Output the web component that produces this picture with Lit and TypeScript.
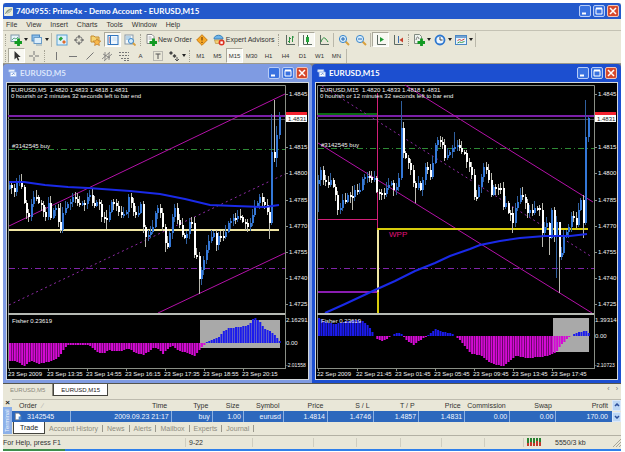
import { LitElement, html, svg, css, nothing } from "lit";
import { customElement, property } from "lit/decorators.js";
import { classMap } from "lit/directives/class-map.js";

type Pt = [number, number];

interface ChartSpec {
  title: string;
  active: boolean;
  x: number;
  left: number;
  right: number;
  heading: string;
  note: string;
  closes: number[];
  wicks: Record<number, Pt>;
  average: string;
  zero: number;
  fisher: Pt[];
  box: number[];
  scale: [string, number][];
  times: string[];
  orderY: number;
}

const STEP = 2.43;

const M5: ChartSpec = {
  title: "EURUSD,M5",
  active: false,
  x: 7,
  left: 8,
  right: 285,
  heading: "EURUSD,M5  1.4820 1.4833 1.4818 1.4831",
  note: "0 hourish or 2 minutes 32 seconds left to bar end",
  closes: [
    185, 188, 192, 183, 181, 187, 203, 213, 217, 204, 197, 197, 203, 205, 212, 217, 203, 218, 210, 208, 222, 230,
    213, 208, 204, 202, 197, 199, 203, 204, 203, 204, 197, 195, 203, 206, 202, 204, 217, 218, 220, 212, 202, 203,
    206, 212, 215, 214, 212, 197, 203, 212, 215, 213, 204, 227, 237, 235, 232, 227, 213, 208, 213, 227, 243, 247,
    233, 217, 208, 220, 225, 235, 238, 234, 222, 223, 255, 256, 279, 270, 260, 250, 241, 237, 233, 245, 236, 236,
    237, 232, 223, 221, 218, 219, 216, 217, 222, 223, 227, 223, 215, 207, 203, 197, 202, 205, 212, 223, 152, 158,
    135, 117,
  ],
  wicks: { 21: [203, 233], 40: [210, 229], 56: [225, 247], 64: [224, 252], 78: [252, 294], 107: [206, 239], 108: [114, 225], 109: [100, 162], 110: [126, 167] },
  average: "9,182 24,182 45,185 68,187 88,188 130,191 160,194 185,199 210,205 235,206 265,207 272,206 279,205",
  zero: 343,
  fisher: [
    [9, 361], [15, 361], [18, 363], [23, 366], [27, 363], [31, 361], [38, 364], [42, 363], [50, 361], [57, 358],
    [60, 354], [64, 347], [68, 345], [88, 345], [91, 348], [97, 352], [103, 354], [108, 350], [113, 351], [120, 351],
    [127, 348], [133, 352], [142, 355], [150, 350], [153, 348], [158, 349], [162, 354], [167, 349], [171, 345],
    [178, 351], [186, 353], [194, 356], [200, 348], [203, 345], [206, 342], [210, 340], [218, 337], [222, 332],
    [228, 328], [240, 327], [248, 325], [252, 319], [255, 318], [259, 322], [263, 328], [270, 332], [275, 336], [279, 341],
  ],
  box: [200, 320, 80, 28],
  scale: [["2.16291", 320], ["0.00", 343], ["-2.01558", 365]],
  times: ["23 Sep 2009", "23 Sep 13:35", "23 Sep 14:55", "23 Sep 16:15", "23 Sep 17:35", "23 Sep 18:55", "23 Sep 20:15"],
  orderY: 149,
};

const M15: ChartSpec = {
  title: "EURUSD,M15",
  active: true,
  x: 316,
  left: 317,
  right: 594,
  heading: "EURUSD,M15  1.4820 1.4833 1.4818 1.4831",
  note: "0 hourish or 12 minutes 32 seconds left to bar end",
  closes: [
    180, 170, 180, 182, 185, 180, 187, 195, 210, 208, 200, 202, 195, 196, 197, 190, 192, 190, 179, 177, 176, 177,
    180, 178, 192, 193, 193, 194, 188, 185, 183, 190, 187, 178, 128, 153, 158, 163, 170, 183, 188, 183, 190, 180,
    167, 170, 177, 163, 145, 140, 142, 145, 158, 155, 152, 148, 147, 145, 148, 152, 153, 162, 167, 175, 197, 197,
    187, 177, 167, 170, 180, 195, 187, 188, 188, 188, 207, 203, 213, 213, 223, 208, 202, 195, 197, 203, 213, 210,
    213, 208, 208, 210, 233, 227, 223, 238, 210, 236, 222, 257, 253, 237, 232, 227, 216, 218, 225, 210, 200, 223,
    137, 118,
  ],
  wicks: { 0: [175, 212], 34: [101, 180], 35: [122, 158], 14: [186, 210], 40: [181, 203], 56: [132, 152], 80: [207, 233], 84: [187, 200], 92: [203, 247], 95: [222, 255], 98: [216, 278], 99: [252, 293], 109: [195, 238], 110: [100, 225], 111: [116, 142] },
  average: "325,313 345,304 375,290 395,281 415,271 435,263 450,256 470,249 480,245 500,241 520,238 545,236 570,236 587,234",
  zero: 336,
  fisher: [
    [318, 318], [322, 320], [327, 323], [335, 324], [345, 321], [355, 320], [362, 321], [367, 325], [372, 333], [374, 336],
    [376, 339], [380, 341], [386, 339], [390, 336], [396, 333], [400, 333], [402, 336], [406, 341], [413, 345],
    [418, 341], [424, 337], [428, 335], [434, 329], [443, 332], [452, 334], [454, 336], [457, 338], [462, 344],
    [468, 351], [471, 354], [480, 355], [487, 361], [495, 365], [503, 366], [510, 360], [515, 356], [526, 358],
    [540, 357], [550, 355], [556, 351], [560, 345], [566, 339], [570, 336], [574, 334], [582, 331], [586, 331], [588, 333],
  ],
  box: [553, 318, 36, 34],
  scale: [["1.39314", 320], ["0.00", 336], ["-2.10723", 365]],
  times: ["22 Sep 2009", "22 Sep 21:45", "23 Sep 01:45", "23 Sep 05:45", "23 Sep 09:45", "23 Sep 13:45", "23 Sep 17:45"],
  orderY: 148,
};

const PRICES: [string, number][] = [
  ["1.4845", 94], ["1.4815", 147], ["1.4800", 173], ["1.4785", 200],
  ["1.4770", 226], ["1.4755", 252], ["1.4740", 278], ["1.4725", 304],
];

function interpolate(points: Pt[], x: number): number {
  for (let i = 1; i < points.length; i++) {
    const [x0, y0] = points[i - 1];
    const [x1, y1] = points[i];
    if (x <= x1) return y0 + ((y1 - y0) * Math.max(0, x - x0)) / (x1 - x0);
  }
  return points[points.length - 1][1];
}

const magnifier = (sign: string) => svg`
  <path d="M7.5 7.5l3.5 3.5" stroke="#d9a03c" stroke-width="2"/>
  <circle cx="5" cy="5" r="3.6" fill="#d6ecfb" stroke="#3b87cc"/>
  <path d=${sign} stroke="#2468b4" fill="none"/>`;
const plus = svg`<path d="M8.500 4.500v7.500M4.500 8.500h7.500" stroke="#129a22" stroke-width="2.800"/>`;
const axes = svg`<path d="M2.5 1v9.5H11" stroke="#5d6a62" fill="none"/>`;

const ICONS: Record<string, unknown> = {
  newchart: svg`<rect x="1" y="1" width="8" height="6.5" fill="#e9f4fb" stroke="#7c98a8"/><path d="M2 6l2-2 2 1 2-2" stroke="#6a8" fill="none"/>${plus}`,
  profiles: svg`<rect x="1" y="1" width="7.5" height="6" fill="#8cc0ec" stroke="#4a86c0"/><rect x="3" y="3.5" width="7.5" height="6" fill="#dceefb" stroke="#6a9cc8"/><path d="M5 11h6" stroke="#8fa8b8"/>`,
  market: svg`<rect x="1" y="1" width="10" height="10" fill="#dff0fb" stroke="#58a0d4"/><path d="M2.500 5l2.500-2.500 2 2-2.500 2.500z" fill="#27a33a"/><path d="M6 8l2-2 2 2-2 2z" fill="#e06a2a"/>`,
  target: svg`<circle cx="6" cy="6" r="3.4" fill="none" stroke="#777"/><path d="M6 1v3.5M6 7.500v3.500M1 6h3.500M7.500 6h3.500" stroke="#555"/>`,
  navigator: svg`<path d="M1 2h3l1 1h4v5H1z" fill="#f6d470" stroke="#c68b2c"/><path d="M7 4.500l1.200 2.300 2.600.3-1.900 1.800.5 2.600L7 10.300l-2.400 1.200.5-2.600-1.900-1.800 2.600-.3z" fill="#f9b94c" stroke="#c07a26" stroke-width=".7"/>`,
  terminal: svg`<rect x="1" y="1.500" width="10" height="9" fill="#eef6fd" stroke="#3377c0"/><path d="M3.500 2v8" stroke="#3377c0"/><path d="M5.500 4h4M5.500 6h4" stroke="#b5cfe6" stroke-width=".7"/><path d="M2 4h1M2 6h1M2 8h1" stroke="#c44"/>`,
  tester: svg`<rect x="1" y="1" width="8" height="9" fill="#f2f7fa" stroke="#8a9aa6"/><path d="M2 3h5M2 5h4" stroke="#7ab0d8"/><path d="M8.500 8.500l3 3" stroke="#d9a03c" stroke-width="1.800"/><circle cx="7" cy="7" r="2.500" fill="#d6ecfb" stroke="#3b87cc"/>`,
  neworder: svg`<path d="M2 .5h5l2 2v7H2z" fill="#fff" stroke="#8a8a8a"/><path d="M3.500 3h3M3.500 5h4" stroke="#aaa"/>${plus}`,
  warning: svg`<path d="M6 .7L11.300 6 6 11.300.7 6z" fill="#f7a928" stroke="#c97b12"/><path d="M6 3v3.500M6 7.800v1.200" stroke="#7a4300" stroke-width="1.200"/>`,
  expert: svg`<path d="M1 5c0-5 9-5 9 0z" fill="#6cb4ea" stroke="#377fba"/><path d="M1.500 6h8l-1 3.500h-6z" fill="#f3cf76" stroke="#b58a35" stroke-width=".6"/><circle cx="8.600" cy="8.600" r="3" fill="#dc3324"/><rect x="7.400" y="7.400" width="2.400" height="2.400" fill="#fff"/>`,
  bars: svg`${axes}<path d="M5.500 3v6M4 7.500h1.500M5.500 4.500H7M8.500 2v6M8.500 3H10" stroke="#2d9140" fill="none"/>`,
  candles: svg`${axes}<path d="M6.500 1v9" stroke="#156e25"/><rect x="5" y="3" width="3" height="5" fill="#22a53a"/>`,
  line: svg`${axes}<path d="M3 8c2-6 4-5 7 0" stroke="#2d9140" fill="none"/>`,
  zoomin: magnifier("M3 5h4M5 3v4"),
  zoomout: magnifier("M3 5h4"),
  autoscroll: svg`${axes}<path d="M5 3l4 2.500L5 8z" fill="#1c9a33"/>`,
  shift: svg`${axes}<path d="M6.500 2v7" stroke="#3b6fb0"/><path d="M11 3.500v5L7.500 6z" fill="#c8402c"/>`,
  indicators: svg`<path d="M1.500.5h5l2 2v7h-7z" fill="#eef3ee" stroke="#808a80"/><path d="M3 6c1-4 2-4 3-1" stroke="#777" fill="none"/>${plus}`,
  clock: svg`<circle cx="6" cy="6" r="4.500" fill="#eaf5ff" stroke="#2d77cf" stroke-width="1.800"/><path d="M6 3v3h2.500" stroke="#444" fill="none"/>`,
  template: svg`<rect x=".5" y="1.500" width="11" height="9" fill="#e7f3fd" stroke="#4b87c4"/><path d="M1 3h10" stroke="#4b87c4" stroke-width="1.500"/><path d="M2.500 6.500l2-1 2 1 3-1.500" stroke="#d0463a" fill="none"/><path d="M2.500 9l2-1 2 .5 3-1" stroke="#3c9b4c" fill="none"/>`,
  cursor: svg`<path d="M3.500 1v8.500l2-2 1.500 3.200 1.300-.7-1.400-3h2.800z" fill="#333"/>`,
  cross: svg`<path d="M6 1v4M6 7v4M1 6h4M7 6h4" stroke="#777"/>`,
  vline: svg`<path d="M6.500 2v8" stroke="#777"/>`,
  hline: svg`<path d="M2 6.500h8" stroke="#777"/>`,
  trend: svg`<path d="M2.500 9.500l7-7" stroke="#777"/>`,
  channel: svg`<path d="M1 9l8-7M3 11l8-7M2 4l7 4M4 2v8M8 3v7" stroke="#777" stroke-width=".8"/>`,
  fibo: svg`<path d="M1 2.500h10M1 5.500h10M3 8.500h8M6 10.500h5" stroke="#777" stroke-dasharray="2 1"/>`,
  label: svg`<rect x="1.500" y="1.500" width="9" height="9" fill="none" stroke="#888" stroke-dasharray="1 1"/><path d="M3.500 4h5M6 4v5" stroke="#555"/>`,
  arrows: svg`<path d="M3 1l2 2-2 2-2-2zM6.500 4l2 2-2 2-2-2z" fill="#444"/><path d="M9 7v4M7 9l2 2 2-2" stroke="#555" fill="none"/>`,
  doc: svg`<path d="M2 1h5l3 3v7H2z" fill="#fff" stroke="#777"/><path d="M7 6h4v5H7z" fill="#4a8ad4"/>`,
  chartwin: svg`<path d="M1 1h8v3H1zM3 4h8v6H3z" fill="#fff" stroke="#9bb9ee"/><path d="M5 8l2-2 2 1" stroke="#2d62c4" fill="none"/>`,
  app: svg`<rect width="12" height="12" rx="1" fill="#e9edda"/><path d="M1 10C3 4 7 2 11 2 10 6 6 9 3 9" fill="#8b9a86"/><path d="M1 11L9 4" stroke="#fff"/>`,
};

const icon = (name: string) => html`<svg class="icon" viewBox="0 0 12 12" fill="none" aria-hidden="true">${ICONS[name]}</svg>`;

const windowButtons = css`
  .controls { display: flex; gap: 2px; }
  .controls button {
    width: 12px; height: 12px; padding: 0; border: 1px solid #b9cdf6; border-radius: 2px;
    background: #3a72e0; display: grid; place-items: center;
  }
  .controls svg { width: 8px; height: 8px; display: block; }
  .controls .close { background: #d6492c; border-color: #f0c5b8; }
  .icon { display: block; flex: none; width: 12px; height: 12px; }
`;

const controls = () => html`
  <div class="controls">
    <button aria-label="Minimize"><svg viewBox="0 0 8 8"><path d="M1 6.500h4" stroke="#fff" stroke-width="2"/></svg></button>
    <button aria-label="Maximize"><svg viewBox="0 0 8 8"><path d="M1 1.500h6v5.500H1z" stroke="#fff" fill="none"/><path d="M1 1.500h6" stroke="#fff" stroke-width="2"/></svg></button>
    <button class="close" aria-label="Close"><svg viewBox="0 0 8 8"><path d="M1 1l6 6M7 1L1 7" stroke="#fff" stroke-width="1.500"/></svg></button>
  </div>`;

@customElement("chart-window")
export class ChartWindow extends LitElement {
  @property({ attribute: false }) spec!: ChartSpec;

  static styles = [windowButtons, css`
    :host { display: block; min-width: 0; }
    .frame { background: #7f9be2; padding: 0 3px 3px; border-radius: 4px 4px 0 0; }
    .frame.active { background: #1c4fd0; }
    .bar { display: flex; align-items: center; gap: 3px; height: 18px; padding: 0 1px 0 2px; }
    .bar h2 { flex: 1; margin: 0; font: 700 8px "Lato", sans-serif; color: #dbe5fb; }
    .active .bar h2 { color: #fff; }
    .bar .icon { width: 9px; height: 9px; }
    .plot { display: block; width: 100%; background: #000; border: 1px solid #d3d8dc; box-sizing: border-box; height: auto; }
    text { font-family: "Liberation Sans", sans-serif; font-size: 6px; fill: #f2f2f2; white-space: pre; }
    .long { font-size: 5px; }
    .price { fill: #222; }
    .pivot { font-size: 8px; fill: #e0107c; }
    .rim { fill: none; stroke: #8a8f86; }
    .thick { stroke: #b6bab4; stroke-width: 2; }
    .bid { stroke: #4c4f58; }
    .ask { stroke: #7a1fa8; stroke-width: 2; }
    .order { stroke: #2e8a36; stroke-dasharray: 6 3 1 3; }
    .stop { stroke: #7f24a8; stroke-dasharray: 6 3 1 3; }
    .channel { stroke: #b411a8; }
    .mid { stroke: #8f2ba6; stroke-dasharray: 2 3; }
    .average { fill: none; stroke: #1a2ae8; stroke-width: 2; }
    .base { stroke: #f1e7a4; stroke-width: 2; }
    .level { stroke: #d8cc0c; stroke-width: 2; fill: none; }
    .resist { stroke: #0b6b12; stroke-width: 2; }
    .range { stroke: #d21f78; fill: none; }
    .support { stroke: #8a1cb0; stroke-width: 2; }
    .up { fill: #3478d8; }
    .down { fill: #fff; }
    .wickup { fill: #2f5f9e; }
    .wickdown { fill: #b9b9b0; }
    .neg { fill: #d40bd4; }
    .pos { fill: #1b1bec; }
    .shade { fill: #a9a9a9; }
    .askbox { fill: #f3232f; }
    .pricebox { fill: #fff; }
  `];

  private candles() {
    const { closes, wicks, left } = this.spec;
    return closes.map((close, i) => {
      const open = i ? closes[i - 1] : close + 4;
      const x = Math.round(left + 1 + i * STEP);
      const top = Math.min(open, close);
      const height = Math.max(2, Math.abs(open - close));
      const wick = wicks[i] ?? [top - 2 - ((i * 7) % 6), top + height + 1 + ((i * 5) % 6)];
      const rising = close < open;
      return svg`
        <rect class=${rising ? "wickup" : "wickdown"} x=${x} y=${wick[0]} width="1" height=${wick[1] - wick[0]}/>
        <rect class=${rising ? "up" : "down"} x=${x} y=${top} width="2" height=${height}/>`;
    });
  }

  private histogram() {
    const { fisher, zero, left, closes } = this.spec;
    return closes.map((_, i) => {
      const x = left + 1 + i * STEP;
      const y = Math.round(interpolate(fisher, x));
      return svg`<rect class=${y > zero ? "neg" : "pos"} x=${x} y=${Math.min(y, zero)} width="2" height=${Math.abs(y - zero)}/>`;
    });
  }

  private studies() {
    if (!this.spec.active) {
      return svg`
        <path class="channel" d="M9 226L285 94M158 313L285 253"/>
        <path class="mid" d="M9 305L285 174"/>
        <path class="base" d="M9 230H279"/>`;
    }
    return svg`
      <path class="resist" d="M318 114H377"/>
      <path class="channel" d="M405 85L593 202M318 143L592 313"/>
      <path class="mid" d="M322 86L592 257"/>
      <path class="support" d="M318 292H377"/>
      <path class="range" d="M318 219.500H377M377.500 93V292"/>
      <path class="level" d="M378 313V229H588"/>
      <path class="base" d="M378 230V292"/>
      <text class="pivot" x="389" y="237">WPP</text>`;
  }

  render() {
    const s = this.spec;
    const [bx, by, bw, bh] = s.box;
    return html`
      <section class=${classMap({ frame: true, active: s.active })}>
        <header class="bar">${icon("chartwin")}<h2>${s.title}</h2>${controls()}</header>
        <svg class="plot" viewBox="${s.x} 83 301 296" role="img" aria-label="${s.title} price chart">
          <path class="rim" d="M${s.left + 0.5} 368V85.500H${s.right + 0.5}V368"/>
          <path class="bid" d="M${s.left} 119.500H${s.right}"/>
          <path class="order" d="M${s.left + 1} ${s.orderY + 0.5}H${s.right}"/>
          <path class="stop" d="M${s.left + 1} 268.500H${s.right}"/>
          <path class="ask" d="M${s.left} 116H${s.right}"/>
          ${this.studies()}
          ${this.candles()}
          <polyline class="average" points=${s.average}/>
          <path class="thick" d="M${s.left} 314H${s.right}"/>
          <rect class="shade" x=${bx} y=${by} width=${bw} height=${bh}/>
          ${this.histogram()}
          <path class="rim" d="M${s.left} 368.500H${s.right + 1}"/>
          <text x=${s.left + 3} y="92">${s.heading}</text>
          <text x=${s.left + 3} y="98">${s.note}</text>
          <text x=${s.left + 4} y=${s.orderY - 1}>#3142545 buy</text>
          <text x=${s.left + 4} y="323">Fisher 0.23619</text>
          ${PRICES.map(([label, y]) => svg`
            <path class="rim" d="M${s.right} ${y + 0.5}h3"/>
            <text x=${s.right + 4} y=${y + 2}>${label}</text>`)}
          ${s.scale.map(([label, y]) => svg`<text class=${label.length > 7 ? "long" : ""} x=${s.right + 1} y=${y + 2}>${label}</text>`)}
          <rect class="askbox" x=${s.right + 1} y="112" width="21" height="3"/>
          <rect class="pricebox" x=${s.right + 1} y="115" width="21" height="7"/>
          <text class="price" x=${s.right + 3} y="121">1.4831</text>
          ${s.times.map((label, i) => svg`
            <path class="rim" d="M${s.left + 1.5 + i * 39} 368v3"/>
            <text x=${s.left + i * 39} y="376">${label}</text>`)}
        </svg>
      </section>`;
  }
}

interface Tool { icon?: string; text?: string; drop?: boolean; on?: boolean; rule?: "grip" | "sep"; }

const grip: Tool = { rule: "grip" };
const sep: Tool = { rule: "sep" };

const STANDARD: Tool[] = [
  grip, { icon: "newchart", drop: true }, { icon: "profiles", drop: true }, sep,
  { icon: "market" }, { icon: "target" }, { icon: "navigator" }, { icon: "terminal", on: true }, { icon: "tester" }, grip,
  { icon: "neworder", text: "New Order" }, { icon: "warning" }, { icon: "expert", text: "Expert Advisors" }, grip,
  { icon: "bars" }, { icon: "candles", on: true }, { icon: "line" }, sep, { icon: "zoomin" }, { icon: "zoomout" }, sep,
  { icon: "autoscroll", on: true }, { icon: "shift" }, grip,
  { icon: "indicators", drop: true }, { icon: "clock", drop: true }, { icon: "template", drop: true }, sep,
];

const STUDIES: Tool[] = [
  grip, { icon: "cursor", on: true }, { icon: "cross" }, grip,
  { icon: "vline" }, { icon: "hline" }, { icon: "trend" }, { icon: "channel" }, { icon: "fibo" }, { text: "A" },
  { icon: "label" }, { icon: "arrows", drop: true }, grip,
  ...["M1", "M5", "M15", "M30", "H1", "H4", "D1", "W1", "MN"].map((text) => ({ text, on: text === "M15" })), sep,
];

const COLUMNS: [string, string, number][] = [
  ["Order", "3142545", 58], ["Time", "2009.09.23 21:17", 101], ["Type", "buy", 41], ["Size", "1.00", 31],
  ["Symbol", "eurusd", 40], ["Price", "1.4814", 44], ["S / L", "1.4746", 46], ["T / P", "1.4857", 45],
  ["Price", "1.4831", 46], ["Commission", "0.00", 45], ["Swap", "0.00", 46], ["Profit", "170.00", 56],
];

@customElement("app-root")
export class AppRoot extends LitElement {
  static styles = [windowButtons, css`
    :host { display: block; padding: 3px 4px 0 3px; background: #fff; color: #333; font: 7px/10px "Liberation Sans", sans-serif; }
    button, a { font: inherit; color: inherit; text-decoration: none; }
    .shell { background: #e9e7d8; }
    .title { display: flex; align-items: center; gap: 3px; height: 16px; padding: 0 2px 0 1px; background: #2359cb; border-radius: 3px 3px 0 0; }
    .title h1 { flex: 1; margin: 0; font: 700 8px "Lato", sans-serif; color: #fff; }
    .title .icon { width: 9px; height: 9px; }
    .menu { display: flex; align-items: center; gap: 9px; height: 11px; padding: 0 3px; border-bottom: 1px solid #c4c2b4; }
    .tools { display: flex; align-items: center; height: 17px; }
    .tools.low { height: 15px; border-bottom: 1px solid #9a988c; }
    .tools button {
      display: flex; align-items: center; justify-content: center; box-sizing: border-box; flex: none;
      width: 17px; height: 15px; padding: 0; border: 1px solid transparent; background: none; white-space: nowrap;
    }
    .tools .drop { width: 21px; gap: 2px; }
    .tools .wide { width: auto; gap: 1px; padding: 0 1px; }
    .tools .on { background: #f8f8f2; border-color: #aaa89a #fff #fff #aaa89a; }
    .tools .short { font-size: 6px; }
    .caret { width: 4px; height: 3px; flex: none; }
    .grip { width: 1px; height: 12px; margin: 0 2px; border-left: 1px dotted #a5a394; box-sizing: border-box; }
    .sep { width: 1px; height: 14px; margin: 0 1px; background: #bab8aa; }
    .desk { display: grid; grid-template-columns: 1fr 1fr; background: #858585; }
    .charttabs { display: flex; height: 13px; border-top: 1px solid #55554e; }
    .charttabs button { height: 12px; padding: 0 7px; border: 0; border-right: 1px solid #8c8a7e; background: none; font-size: 6px; color: #8a887c; }
    .charttabs .current { background: #fff; color: #222; border: 1px solid #44443e; border-top: 0; }
    .spin { margin-left: auto; display: flex; gap: 6px; padding: 0 3px; color: #777; }
    .panel { display: grid; grid-template-columns: 9px 1fr; margin-top: 2px; }
    .side { display: flex; flex-direction: column; align-items: center; }
    .side button { width: 9px; height: 8px; padding: 0; border: 0; background: none; font: 700 8px/8px "Liberation Sans", sans-serif; color: #222; }
    .side span { flex: 1; writing-mode: vertical-rl; transform: rotate(180deg); width: 9px; line-height: 9px; font-size: 6px; text-align: center; background: #8cb0e8; color: #eef4ff; }
    .sheet { display: grid; grid-template-columns: 1fr 9px; border-top: 1px solid #bdbbae; }
    table { width: 100%; table-layout: fixed; border-collapse: collapse; line-height: 11px; }
    th, td { padding: 0 4px 0 0; height: 11px; font-weight: 400; text-align: right; white-space: nowrap; box-sizing: border-box; }
    th:first-child { text-align: left; padding-left: 7px; }
    td { background: #2d68bd; color: #f2f6ff; border-right: 1px solid #8db1e2; padding-right: 2px; }
    td:last-child { border: 0; padding-right: 4px; }
    .order { display: flex; align-items: center; gap: 5px; padding-left: 2px; }
    .order .icon { width: 8px; height: 9px; }
    .sort { color: #aaa; padding-left: 5px; }
    .scroll { display: grid; grid-template-rows: 1fr 1fr; gap: 1px; }
    .scroll button { padding: 0; border: 1px solid #dbe8fa; background: #bcd6f4; display: grid; place-items: center; }
    .scroll svg { width: 6px; height: 4px; }
    .tabs { display: flex; height: 12px; align-items: center; color: #8d8b7e; }
    .tabs a { padding: 0 4px; border-right: 1px solid #9a988c; line-height: 7px; white-space: nowrap; }
    .tabs .current { background: #fff; color: #222; border: 1px solid #44443e; border-top: 0; line-height: 11px; padding: 0 6px; margin-left: 1px; }
    .status { display: grid; grid-template-columns: 182fr 67fr 61fr 43fr 44fr 41fr 43fr 39fr 98fr; align-items: center; height: 13px; margin-top: 1px; border-top: 1px solid #b3b1a4; }
    .status span { border-left: 1px solid #cfcdbf; height: 9px; padding-left: 3px; white-space: nowrap; }
    .status span:first-child { border: 0; padding-left: 0; }
    .status .traffic { display: flex; gap: 14px; padding-left: 3px; }
    .traffic svg { width: 14px; height: 8px; flex: none; }
    .traffic .size { margin-left: auto; width: 8px; height: 9px; }
    .task { display: grid; grid-template-columns: 1fr 9fr; height: 2px; background: #2f80ea; }
    .task i { background: #3f8d4c; }
  `];

  private tool(t: Tool) {
    if (t.rule) return html`<span class=${t.rule}></span>`;
    const cls = { drop: !!t.drop, on: !!t.on, wide: !!(t.icon && t.text), short: !t.icon };
    return html`<button class=${classMap(cls)} aria-label=${t.text ?? t.icon ?? ""}>
      ${t.icon ? icon(t.icon) : nothing}${t.text ?? nothing}
      ${t.drop ? html`<svg class="caret" viewBox="0 0 4 3"><path d="M0 0h4L2 3z" fill="#222"/></svg>` : nothing}
    </button>`;
  }

  render() {
    return html`
      <main class="shell">
        <header class="title">${icon("app")}<h1>7404955: Prime4x - Demo Account - EURUSD,M15</h1>${controls()}</header>
        <nav class="menu">${["File", "View", "Insert", "Charts", "Tools", "Window", "Help"].map((m) => html`<a href="#">${m}</a>`)}</nav>
        <div class="tools">${STANDARD.map((t) => this.tool(t))}</div>
        <div class="tools low">${STUDIES.map((t) => this.tool(t))}</div>
        <div class="desk">
          <chart-window .spec=${M5}></chart-window>
          <chart-window .spec=${M15}></chart-window>
        </div>
        <div class="charttabs">
          <button>EURUSD,M5</button><button class="current">EURUSD,M15</button>
          <div class="spin"><span>‹</span><span>›</span></div>
        </div>
        <section class="panel">
          <div class="side"><button aria-label="Close terminal">×</button><span>Terminal</span></div>
          <div>
            <div class="sheet">
              <table>
                <colgroup>${COLUMNS.map(([, , w]) => html`<col style="width:${(w / 599) * 100}%">`)}</colgroup>
                <thead><tr>${COLUMNS.map(([h], i) => html`<th scope="col">${h}${i ? nothing : html`<span class="sort">∕</span>`}</th>`)}</tr></thead>
                <tbody><tr>${COLUMNS.map(([, v], i) => html`<td>${i ? v : html`<span class="order">${icon("doc")}${v}</span>`}</td>`)}</tr></tbody>
              </table>
              <div class="scroll">
                <button aria-label="Scroll up"><svg viewBox="0 0 6 4"><path d="M1 3l2-2 2 2" stroke="#2c4f9a" stroke-width="1.500" fill="none"/></svg></button>
                <button aria-label="Scroll down"><svg viewBox="0 0 6 4"><path d="M1 1l2 2 2-2" stroke="#2c4f9a" stroke-width="1.500" fill="none"/></svg></button>
              </div>
            </div>
            <nav class="tabs">
              <a class="current" href="#">Trade</a>
              ${["Account History", "News", "Alerts", "Mailbox", "Experts", "Journal"].map((t) => html`<a href="#">${t}</a>`)}
            </nav>
          </div>
        </section>
        <footer class="status">
          <span>For Help, press F1</span><span>9-22</span><span></span><span></span><span></span><span></span><span></span><span></span>
          <span class="traffic">
            <svg viewBox="0 0 14 8"><path d="M1 0v8M4 0v8M7 0v8M10 0v8M13 0v8" stroke="#27822f" stroke-width="2"/><path d="M1 5v3M4 4v4M7 5v3M10 3v5M13 4v4" stroke="#c23a2c" stroke-width="2"/></svg>
            5550/3 kb
            <svg class="size" viewBox="0 0 8 9"><path d="M0 9l8-8M3 9l5-5M6 9l2-2" stroke="#a7a598"/></svg>
          </span>
        </footer>
        <div class="task"><i></i></div>
      </main>`;
  }
}
